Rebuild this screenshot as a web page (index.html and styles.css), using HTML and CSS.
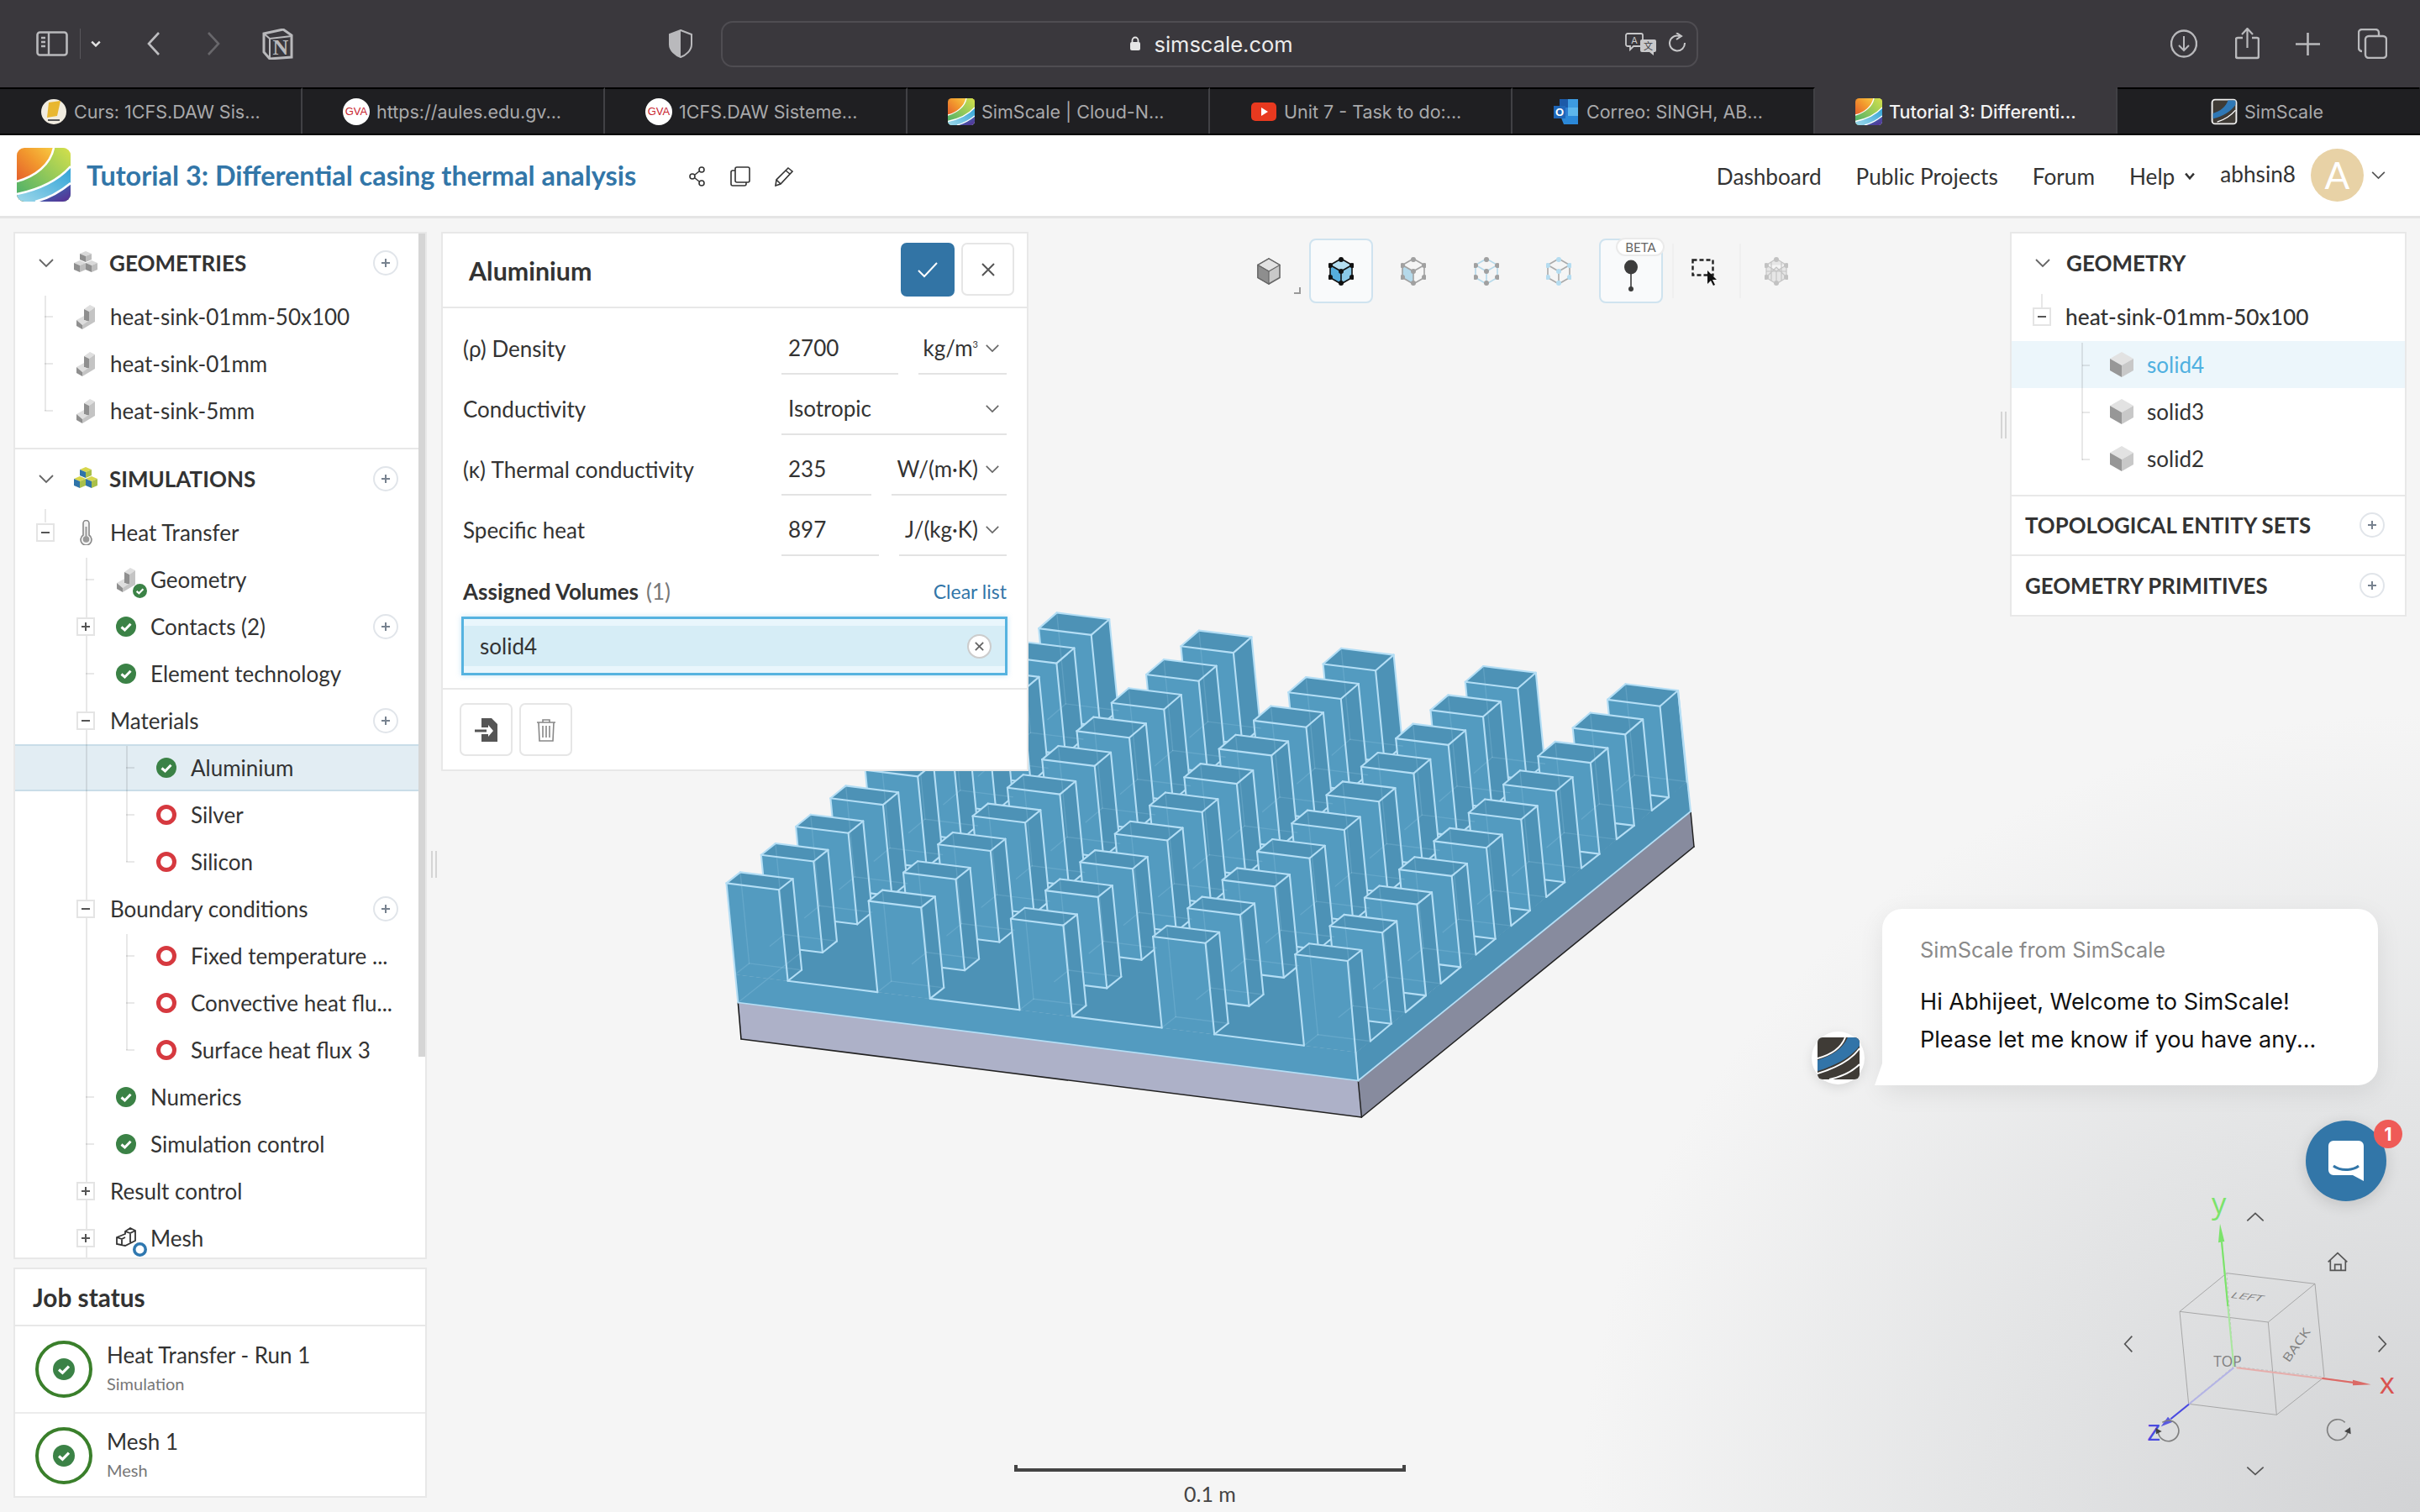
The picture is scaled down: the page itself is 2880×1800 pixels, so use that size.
FILE: index.html
```html
<!DOCTYPE html>
<html lang="en">
<head>
  <meta charset="UTF-8" />
  <title>Tutorial 3: Differential casing thermal analysis - SimScale</title>
  <link rel="stylesheet" href="styles.css">
</head>
<body>
  <svg class="defs" width="0" height="0">
    <defs>
      <linearGradient id="g1" x1="0" y1="1" x2="1" y2="0"><stop offset="0" stop-color="#dd3f2b"/><stop offset=".55" stop-color="#f29a2e"/><stop offset="1" stop-color="#fbe54d"/></linearGradient>
      <linearGradient id="g2" x1="0" y1="1" x2="1" y2="0"><stop offset="0" stop-color="#45ad6b"/><stop offset="1" stop-color="#d5e04b"/></linearGradient>
      <linearGradient id="g3" x1="0" y1="1" x2="1" y2="0"><stop offset="0" stop-color="#9ed8ea"/><stop offset="1" stop-color="#2ea1d6"/></linearGradient>
      <linearGradient id="g4" x1="0" y1="0" x2="1" y2="1"><stop offset="0" stop-color="#2a86c0"/><stop offset="1" stop-color="#5b2b92"/></linearGradient>
      <clipPath id="logo-clip"><rect width="64" height="64" rx="9"/></clipPath>
      <clipPath id="mark-clip"><rect width="50" height="50" rx="6"/></clipPath>
      <symbol id="logo" viewBox="0 0 64 64">
        <g clip-path="url(#logo-clip)">
          <rect width="64" height="64" fill="url(#g1)"/>
          <path d="M44 0C40 20 22 34 0 40V64H64V0Z" fill="url(#g2)"/>
          <path d="M64 22C48 40 24 50 0 55V64H64Z" fill="url(#g3)"/>
          <path d="M64 42C52 52 38 60 22 64H64Z" fill="url(#g4)"/>
          <path d="M44 0C40 20 22 34 0 40M64 22C48 40 24 50 0 55M64 42C52 52 38 60 22 64" fill="none" stroke="#fff" stroke-width="2.6"/>
        </g>
      </symbol>
      <symbol id="mark" viewBox="0 0 50 50">
        <g clip-path="url(#mark-clip)">
          <rect width="50" height="50" fill="#3f3b36"/>
          <path d="M36 0H50V10C40 24 20 34 0 40V27C16 22 30 14 36 0Z" fill="#3274a8"/>
          <path d="M33 0C28 13 15 21 0 25M50 13C40 27 20 37 0 43M50 32C40 42 28 47 14 50" fill="none" stroke="#fff" stroke-width="2"/>
        </g>
      </symbol>
      <symbol id="chev" viewBox="0 0 20 12"><path d="M2 2L10 10L18 2" fill="none" stroke="currentColor" stroke-width="1.8"/></symbol>
      <symbol id="plus-c" viewBox="0 0 30 30"><circle cx="15" cy="15" r="14" fill="#fff" stroke="#e1e5ea" stroke-width="2"/><path d="M10 15H20M15 10V20" stroke="#77828f" stroke-width="2"/></symbol>
      <symbol id="exp-minus" viewBox="0 0 22 22"><rect x="1" y="1" width="20" height="20" fill="#fff" stroke="#e4e4e4" stroke-width="2"/><path d="M6 11H16" stroke="#555" stroke-width="2"/></symbol>
      <symbol id="exp-plus" viewBox="0 0 22 22"><rect x="1" y="1" width="20" height="20" fill="#fff" stroke="#e4e4e4" stroke-width="2"/><path d="M6 11H16M11 6V16" stroke="#555" stroke-width="2"/></symbol>
      <symbol id="ok" viewBox="0 0 24 24"><circle cx="12" cy="12" r="12" fill="#3b8246"/><path d="M6.5 12.5L10.5 16L17.5 8.8" fill="none" stroke="#fff" stroke-width="3"/></symbol>
      <symbol id="bad" viewBox="0 0 24 24"><circle cx="12" cy="12" r="9.5" fill="none" stroke="#d6393f" stroke-width="5"/></symbol>
      <symbol id="blocks" viewBox="0 0 30 30">
        <path d="M15 1L22 4L15 7L8 4Z" fill="#d9d9d9"/><path d="M8 4L15 7V14L8 11Z" fill="#8f8f8f"/><path d="M22 4L15 7V14L22 11Z" fill="#bdbdbd"/>
        <path d="M8 12L15 15L8 18L1 15Z" fill="#d9d9d9"/><path d="M1 15L8 18V26L1 23Z" fill="#8f8f8f"/><path d="M15 15L8 18V26L15 23Z" fill="#bdbdbd"/>
        <path d="M22 12L29 15L22 18L15 15Z" fill="#d9d9d9"/><path d="M15 15L22 18V26L15 23Z" fill="#8f8f8f"/><path d="M29 15L22 18V26L29 23Z" fill="#bdbdbd"/>
      </symbol>
      <symbol id="blocks-col" viewBox="0 0 30 30">
        <path d="M15 1L22 4L15 7L8 4Z" fill="#d7d64c"/><path d="M8 4L15 7V14L8 11Z" fill="#2f74a8"/><path d="M22 4L15 7V14L22 11Z" fill="#a9c04b"/>
        <path d="M8 12L15 15L8 18L1 15Z" fill="#d7d64c"/><path d="M1 15L8 18V26L1 23Z" fill="#2f74a8"/><path d="M15 15L8 18V26L15 23Z" fill="#a9c04b"/>
        <path d="M22 12L29 15L22 18L15 15Z" fill="#d7d64c"/><path d="M15 15L22 18V26L15 23Z" fill="#2f74a8"/><path d="M29 15L22 18V26L29 23Z" fill="#a9c04b"/>
      </symbol>
      <symbol id="step" viewBox="0 0 30 30">
        <path d="M13 6L20 1L26 4L19 9Z" fill="#dedede"/><path d="M13 6L19 9V21L13 19Z" fill="#8f8f8f"/><path d="M26 4L19 9V21L26 16Z" fill="#c4c4c4"/>
        <path d="M4 19L13 14V19L19 21L11 25Z" fill="#dedede"/><path d="M4 19L11 25V30L4 26Z" fill="#8f8f8f"/><path d="M11 25L26 15V21L11 30Z" fill="#c4c4c4"/>
      </symbol>
      <symbol id="step-line" viewBox="0 0 30 30">
        <path d="M14 7L20 3L26 6V18L14 24L4 22V14L14 10ZM14 7L20 9L26 6M20 9V20M4 14L10 16L14 14M10 16V24" fill="none" stroke="#333" stroke-width="1.8"/>
      </symbol>
      <symbol id="thermo" viewBox="0 0 30 30">
        <path d="M12 4a3.5 3.5 0 0 1 7 0V18a6.5 6.5 0 1 1-7 0Z" fill="#f2f2f2" stroke="#888" stroke-width="1.6"/><circle cx="15.5" cy="23" r="3.8" fill="#999"/><path d="M15.5 8V22" stroke="#999" stroke-width="2"/>
      </symbol>
      <symbol id="cube" viewBox="0 0 28 30"><path d="M14 0L28 8L14 16L0 8Z" fill="#e2e2e2"/><path d="M0 8L14 16V30L0 22Z" fill="#979797"/><path d="M28 8L14 16V30L28 22Z" fill="#c8c8c8"/></symbol>
    </defs>
  </svg>

  <div class="toolbar">
    <svg class="tb-sidebar" width="38" height="30" viewBox="0 0 38 30"><rect x="1.5" y="1.5" width="35" height="27" rx="3" fill="none" stroke="#b9b9bc" stroke-width="2.6"/><path d="M15 2V28M6 8H11M6 13H11M6 18H11" stroke="#b9b9bc" stroke-width="2.4"/></svg>
    <span class="tb-divider"></span>
    <svg class="tb-chevron" width="12" height="8" viewBox="0 0 20 12"><path d="M2 2L10 10L18 2" fill="none" stroke="#e2e2e2" stroke-width="4"/></svg>
    <svg class="tb-back" width="16" height="28" viewBox="0 0 16 28"><path d="M14 1L2 14L14 27" fill="none" stroke="#bdbdc0" stroke-width="2.6"/></svg>
    <svg class="tb-forward" width="16" height="28" viewBox="0 0 16 28"><path d="M2 1L14 14L2 27" fill="none" stroke="#68676b" stroke-width="2.6"/></svg>
    <svg class="tb-notion" width="37" height="37" viewBox="0 0 37 37">
      <path d="M2 6L25 1L35 8V34L9 36L2 28Z" fill="none" stroke="#b9b9bc" stroke-width="3"/><path d="M2 6L9 12L35 9M9 12V35" fill="none" stroke="#b9b9bc" stroke-width="2"/>
      <text class="notion-n" x="22" y="31">N</text>
    </svg>
    <svg class="tb-shield" width="28" height="34" viewBox="0 0 28 34"><path d="M14 1L27 6V18C27 25 20 31 14 33C8 31 1 25 1 18V6Z" fill="none" stroke="#b9b9bc" stroke-width="2"/><path d="M14 1L1 6V18C1 25 8 31 14 33Z" fill="#b9b9bc"/></svg>
    <div class="address">
      <span></span>
      <div class="address-host">
        <svg width="14" height="18" viewBox="0 0 14 18"><rect x="1" y="7" width="12" height="10" rx="2" fill="#e6e6e6"/><path d="M3.5 8V5a3.5 3.5 0 0 1 7 0V8" fill="none" stroke="#e6e6e6" stroke-width="1.8"/></svg>
        <span>simscale.com</span>
      </div>
      <div class="address-tools">
        <svg width="38" height="27" viewBox="0 0 38 27"><path d="M3 1H19a2 2 0 0 1 2 2V14a2 2 0 0 1-2 2H10L6 20V16H3a2 2 0 0 1-2-2V3a2 2 0 0 1 2-2Z" fill="none" stroke="#c8c8ca" stroke-width="1.8"/><path d="M20 8H35a2 2 0 0 1 2 2V21a2 2 0 0 1-2 2H34V27L29 23H20a2 2 0 0 1-2-2V10a2 2 0 0 1 2-2Z" fill="#c8c8ca"/><text class="tr-a" x="11" y="13">A</text><text class="tr-b" x="27.500" y="20">文</text></svg>
        <svg width="21" height="26" viewBox="0 0 21 26"><path d="M13 4A9 9 0 1 0 19 12" fill="none" stroke="#c8c8ca" stroke-width="2"/><path d="M9 0L15 4L9 8" fill="none" stroke="#c8c8ca" stroke-width="2"/></svg>
      </div>
    </div>
    <svg class="tb-download" width="32" height="34" viewBox="0 0 32 34"><ellipse cx="16" cy="17" rx="15" ry="15.500" fill="none" stroke="#b9b9bc" stroke-width="2.4"/><path d="M16 8V25M10 19L16 25L22 19" fill="none" stroke="#b9b9bc" stroke-width="2"/></svg>
    <svg class="tb-share" width="29" height="38" viewBox="0 0 29 38"><path d="M9 12H3a2 2 0 0 0-2 2V34a2 2 0 0 0 2 2H26a2 2 0 0 0 2-2V14a2 2 0 0 0-2-2H20" fill="none" stroke="#b9b9bc" stroke-width="2.6"/><path d="M14.500 24V2M8 8L14.500 1L21 8" fill="none" stroke="#b9b9bc" stroke-width="2.2"/></svg>
    <svg class="tb-plus" width="29" height="27" viewBox="0 0 29 27"><path d="M14.500 0V27M0 13.500H29" stroke="#b9b9bc" stroke-width="2.6"/></svg>
    <svg class="tb-tabs" width="35" height="36" viewBox="0 0 35 36"><rect x="9" y="9" width="25" height="26" rx="4" fill="#3a383d" stroke="#b9b9bc" stroke-width="2.4"/><path d="M5 27A4 4 0 0 1 1 23V5A4 4 0 0 1 5 1H21A4 4 0 0 1 25 5V9" fill="none" stroke="#b9b9bc" stroke-width="2.4"/></svg>
  </div>

  <div class="tabbar">
    <div class="tab">
      <svg class="favicon" viewBox="0 0 32 32"><circle cx="16" cy="16" r="15" fill="#f1ece0"/><path d="M10 5L24 3L20 21L8 23Z" fill="#e8b730"/><path d="M9 26H23" stroke="#555" stroke-width="2"/></svg>
      <span class="tab-title">Curs: 1CFS.DAW Sis...</span>
    </div>
    <div class="tab">
      <svg class="favicon" viewBox="0 0 32 32"><circle cx="16" cy="16" r="16" fill="#fff"/><text class="gva" x="16" y="20">GVA</text></svg>
      <span class="tab-title">https://aules.edu.gv...</span>
    </div>
    <div class="tab">
      <svg class="favicon" viewBox="0 0 32 32"><circle cx="16" cy="16" r="16" fill="#fff"/><text class="gva" x="16" y="20">GVA</text></svg>
      <span class="tab-title">1CFS.DAW Sisteme...</span>
    </div>
    <div class="tab">
      <svg class="favicon" viewBox="0 0 64 64"><use href="#logo"/></svg>
      <span class="tab-title">SimScale | Cloud-N...</span>
    </div>
    <div class="tab">
      <svg class="favicon" viewBox="0 0 32 32"><rect x="1" y="5" width="30" height="22" rx="5" fill="#e8391f"/><path d="M13 11L21 16L13 21Z" fill="#fff"/></svg>
      <span class="tab-title">Unit 7 - Task to do:...</span>
    </div>
    <div class="tab">
      <svg class="favicon" viewBox="0 0 32 32"><rect x="8" y="1" width="10" height="10" fill="#1c5aa8"/><rect x="18" y="1" width="12" height="10" fill="#3d9be0"/><rect x="8" y="11" width="10" height="10" fill="#2b7cd3"/><rect x="18" y="11" width="12" height="10" fill="#5db6ec"/><path d="M9 21H30V31H13Z" fill="#2b88d8"/><rect x="1" y="9" width="14" height="15" fill="#1f66b8"/><text class="ol" x="8" y="21">O</text></svg>
      <span class="tab-title">Correo: SINGH, AB...</span>
    </div>
    <div class="tab tab-active">
      <svg class="favicon" viewBox="0 0 64 64"><use href="#logo"/></svg>
      <span class="tab-title">Tutorial 3: Differenti...</span>
    </div>
    <div class="tab tab-last">
      <svg class="favicon" viewBox="0 0 50 50"><rect x="1" y="1" width="48" height="48" rx="7" fill="#f0f0f0"/><rect x="4" y="4" width="42" height="42" rx="4" fill="#3f3b36"/><path d="M32 4H46V12C38 24 22 34 4 38V28C18 24 28 16 32 4Z" fill="#2f78b6"/><path d="M46 22C36 34 24 40 12 44" fill="none" stroke="#fff" stroke-width="2"/></svg>
      <span class="tab-title">SimScale</span>
    </div>
  </div>

  <header class="app-header">
    <svg class="app-logo" viewBox="0 0 64 64"><use href="#logo"/></svg>
    <h1 class="project-title">Tutorial 3: Differential casing thermal analysis</h1>
    <div class="project-actions">
      <svg width="22" height="24" viewBox="0 0 22 24"><circle cx="16" cy="4" r="3" fill="none" stroke="#333" stroke-width="1.6"/><circle cx="5" cy="12" r="3" fill="none" stroke="#333" stroke-width="1.6"/><circle cx="16" cy="20" r="3" fill="none" stroke="#333" stroke-width="1.6"/><path d="M8 10L13 6M8 14L13 18" stroke="#333" stroke-width="1.6"/></svg>
      <svg width="24" height="24" viewBox="0 0 24 24"><rect x="6" y="1" width="17" height="18" rx="2" fill="none" stroke="#333" stroke-width="1.6"/><path d="M6 5H3a2 2 0 0 0-2 2V21a2 2 0 0 0 2 2H17a2 2 0 0 0 2-2V19" fill="none" stroke="#333" stroke-width="1.6"/></svg>
      <svg width="24" height="24" viewBox="0 0 24 24"><path d="M17 2L22 6L8 21L2 23L3 16ZM3 16L8 21M14 5L19 9" fill="none" stroke="#333" stroke-width="1.6"/></svg>
    </div>
    <nav class="top-nav">
      <a>Dashboard</a>
      <a>Public Projects</a>
      <a>Forum</a>
      <a class="help">Help <svg width="14" height="9" viewBox="0 0 20 12"><path d="M3 2L10 10L17 2" fill="none" stroke="#333" stroke-width="3.6"/></svg></a>
      <span class="user-name">abhsin8</span>
      <span class="avatar">A</span>
      <svg class="user-chevron" width="19" height="11" viewBox="0 0 20 12"><use href="#chev"/></svg>
    </nav>
  </header>

  <main class="viewport">
    <svg id="sink" class="sink" viewBox="0 260 2880 1540" width="2880" height="1540"></svg>

    <aside class="left-col">
      <section class="panel tree-panel">
        <div class="tree">
          <div class="section geo-section">
            <div class="head">
              <svg class="head-chev" viewBox="0 0 20 12"><use href="#chev"/></svg>
              <svg class="icon" viewBox="0 0 30 30"><use href="#blocks"/></svg>
              <span class="head-title">GEOMETRIES</span>
              <svg class="add" viewBox="0 0 30 30"><use href="#plus-c"/></svg>
            </div>
            <div class="branch b0 b-geo">
              <div class="row lvl0 tick"><span class="exp"></span><svg class="icon" viewBox="0 0 30 30"><use href="#step"/></svg><span>heat-sink-01mm-50x100</span></div>
              <div class="row lvl0 tick"><span class="exp"></span><svg class="icon" viewBox="0 0 30 30"><use href="#step"/></svg><span>heat-sink-01mm</span></div>
              <div class="row lvl0 tick"><span class="exp"></span><svg class="icon" viewBox="0 0 30 30"><use href="#step"/></svg><span>heat-sink-5mm</span></div>
            </div>
          </div>
          <div class="section">
            <div class="head">
              <svg class="head-chev" viewBox="0 0 20 12"><use href="#chev"/></svg>
              <svg class="icon" viewBox="0 0 30 30"><use href="#blocks-col"/></svg>
              <span class="head-title">SIMULATIONS</span>
              <svg class="add" viewBox="0 0 30 30"><use href="#plus-c"/></svg>
            </div>
            <div class="row lvl0 stem"><svg class="exp" viewBox="0 0 22 22"><use href="#exp-minus"/></svg><svg class="icon" viewBox="0 0 30 30"><use href="#thermo"/></svg><span>Heat Transfer</span></div>
            <div class="branch b1">
              <div class="row lvl1 tick"><span class="exp"></span><span class="icon badged"><svg class="icon-inner" viewBox="0 0 30 30"><use href="#step"/></svg><svg class="badge" viewBox="0 0 24 24"><use href="#ok"/></svg></span><span>Geometry</span></div>
              <div class="row lvl1"><svg class="exp" viewBox="0 0 22 22"><use href="#exp-plus"/></svg><svg class="icon status" viewBox="0 0 24 24"><use href="#ok"/></svg><span>Contacts (2)</span><svg class="add" viewBox="0 0 30 30"><use href="#plus-c"/></svg></div>
              <div class="row lvl1 tick"><span class="exp"></span><svg class="icon status" viewBox="0 0 24 24"><use href="#ok"/></svg><span>Element technology</span></div>
              <div class="row lvl1"><svg class="exp" viewBox="0 0 22 22"><use href="#exp-minus"/></svg><span class="no-icon"></span><span>Materials</span><svg class="add" viewBox="0 0 30 30"><use href="#plus-c"/></svg></div>
              <div class="branch b2">
                <div class="row lvl2 tick selected"><span class="exp"></span><svg class="icon status" viewBox="0 0 24 24"><use href="#ok"/></svg><span>Aluminium</span></div>
                <div class="row lvl2 tick"><span class="exp"></span><svg class="icon status" viewBox="0 0 24 24"><use href="#bad"/></svg><span>Silver</span></div>
                <div class="row lvl2 tick"><span class="exp"></span><svg class="icon status" viewBox="0 0 24 24"><use href="#bad"/></svg><span>Silicon</span></div>
              </div>
              <div class="row lvl1"><svg class="exp" viewBox="0 0 22 22"><use href="#exp-minus"/></svg><span class="no-icon"></span><span>Boundary conditions</span><svg class="add" viewBox="0 0 30 30"><use href="#plus-c"/></svg></div>
              <div class="branch b2">
                <div class="row lvl2 tick"><span class="exp"></span><svg class="icon status" viewBox="0 0 24 24"><use href="#bad"/></svg><span>Fixed temperature ...</span></div>
                <div class="row lvl2 tick"><span class="exp"></span><svg class="icon status" viewBox="0 0 24 24"><use href="#bad"/></svg><span>Convective heat flu...</span></div>
                <div class="row lvl2 tick"><span class="exp"></span><svg class="icon status" viewBox="0 0 24 24"><use href="#bad"/></svg><span>Surface heat flux 3</span></div>
              </div>
              <div class="row lvl1 tick"><span class="exp"></span><svg class="icon status" viewBox="0 0 24 24"><use href="#ok"/></svg><span>Numerics</span></div>
              <div class="row lvl1 tick"><span class="exp"></span><svg class="icon status" viewBox="0 0 24 24"><use href="#ok"/></svg><span>Simulation control</span></div>
              <div class="row lvl1"><svg class="exp" viewBox="0 0 22 22"><use href="#exp-plus"/></svg><span class="no-icon"></span><span>Result control</span></div>
              <div class="row lvl1"><svg class="exp" viewBox="0 0 22 22"><use href="#exp-plus"/></svg><span class="icon badged"><svg class="icon-inner" viewBox="0 0 30 30"><use href="#step-line"/></svg><svg class="badge" viewBox="0 0 24 24"><circle cx="12" cy="12" r="9.500" fill="none" stroke="#2f78b0" stroke-width="5"/></svg></span><span>Mesh</span></div>
            </div>
          </div>
        </div>
        <span class="scrollbar"></span>
      </section>

      <section class="panel job-panel">
        <div class="job-title">Job status</div>
        <div class="job-row">
          <span class="job-ring"><svg viewBox="0 0 24 24"><use href="#ok"/></svg></span>
          <div class="job-text"><div>Heat Transfer - Run 1</div><div class="job-sub">Simulation</div></div>
        </div>
        <div class="job-row">
          <span class="job-ring"><svg viewBox="0 0 24 24"><use href="#ok"/></svg></span>
          <div class="job-text"><div>Mesh 1</div><div class="job-sub">Mesh</div></div>
        </div>
      </section>
    </aside>

    <section class="panel material">
      <div class="material-head">
        <h2>Aluminium</h2>
        <button class="btn-ok"><svg width="26" height="20" viewBox="0 0 26 20"><path d="M2 11L9 18L24 2" fill="none" stroke="#fff" stroke-width="2"/></svg></button>
        <button class="btn-close"><svg width="18" height="18" viewBox="0 0 18 18"><path d="M2 2L16 16M16 2L2 16" stroke="#555" stroke-width="2"/></svg></button>
      </div>
      <div class="form">
        <div class="field-row"><label>(ρ) Density</label><span class="field w139">2700</span><span class="field unit w105"><span>kg/m<sup>3</sup></span><svg viewBox="0 0 20 12"><use href="#chev"/></svg></span></div>
        <div class="field-row"><label>Conductivity</label><span class="field w268 select">Isotropic<svg viewBox="0 0 20 12"><use href="#chev"/></svg></span></div>
        <div class="field-row"><label>(κ) Thermal conductivity</label><span class="field w107">235</span><span class="field unit w137">W/(m·K)<svg viewBox="0 0 20 12"><use href="#chev"/></svg></span></div>
        <div class="field-row"><label>Specific heat</label><span class="field w116">897</span><span class="field unit w128">J/(kg·K)<svg viewBox="0 0 20 12"><use href="#chev"/></svg></span></div>
      </div>
      <div class="assigned-head">
        <span class="assigned-title">Assigned Volumes</span><span class="assigned-count">(1)</span>
        <a class="clear-list">Clear list</a>
      </div>
      <div class="assigned-box">
        <div class="assigned-item">
          <span>solid4</span>
          <span class="remove"><svg width="13" height="13" viewBox="0 0 14 14"><path d="M2 2L12 12M12 2L2 12" stroke="#666" stroke-width="2"/></svg></span>
        </div>
      </div>
      <div class="material-foot">
        <button class="btn-icon"><svg width="28" height="30" viewBox="0 0 28 30"><path d="M8 1H20L27 8V29H8V20H16V23L22 16L16 9V12H8Z" fill="#555"/><path d="M0 16H14" stroke="#555" stroke-width="3"/></svg></button>
        <button class="btn-icon"><svg width="24" height="28" viewBox="0 0 24 28"><path d="M1 5H23M8 5V2H16V5M3 5L4 27H20L21 5M8 9V23M12 9V23M16 9V23" fill="none" stroke="#888" stroke-width="1.6"/></svg></button>
      </div>
    </section>

    <span class="spacer"></span>

    <section class="panel geometry">
      <div class="g-head">
        <svg class="head-chev" viewBox="0 0 20 12"><use href="#chev"/></svg>
        <span class="head-title">GEOMETRY</span>
      </div>
      <div class="g-root">
        <svg class="g-exp" viewBox="0 0 22 22"><use href="#exp-minus"/></svg>
        <span>heat-sink-01mm-50x100</span>
      </div>
      <div class="g-branch">
        <div class="g-row g-selected"><svg class="g-cube" viewBox="0 0 28 30"><use href="#cube"/></svg><span>solid4</span></div>
        <div class="g-row"><svg class="g-cube" viewBox="0 0 28 30"><use href="#cube"/></svg><span>solid3</span></div>
        <div class="g-row"><svg class="g-cube" viewBox="0 0 28 30"><use href="#cube"/></svg><span>solid2</span></div>
      </div>
      <div class="g-set"><span class="head-title">TOPOLOGICAL ENTITY SETS</span><svg class="add" viewBox="0 0 30 30"><use href="#plus-c"/></svg></div>
      <div class="g-set"><span class="head-title">GEOMETRY PRIMITIVES</span><svg class="add" viewBox="0 0 30 30"><use href="#plus-c"/></svg></div>
    </section>

    <span class="handle handle-left"></span>
    <span class="handle handle-right"></span>

    <div class="view-tools">
      <div class="tool">
        <svg width="28" height="32" viewBox="0 0 28 32"><path d="M14 1L27 8.500V23.500L14 31L1 23.500V8.500Z" fill="#c8c8c8" stroke="#666" stroke-width="1.6"/><path d="M14 1L27 8.500L14 16L1 8.500Z" fill="#e3e3e3" stroke="#666" stroke-width="1.2"/><path d="M1 8.500L14 16V31L1 23.500Z" fill="#8e8e8e" stroke="#666" stroke-width="1.2"/></svg>
        <span class="tool-corner"></span>
      </div>
      <div class="tool tool-on">
        <svg width="30" height="34" viewBox="0 0 30 34"><path d="M15 2L28 9.500L15 17L2 9.500Z" fill="#b5dff2"/><path d="M2 9.500L15 17V32L2 24.500Z" fill="#56aede"/><path d="M28 9.500L15 17V32L28 24.500Z" fill="#8ac9e8"/><path d="M15 2L28 9.500V24.500L15 32L2 24.500V9.500ZM2 9.500L15 17L28 9.500M15 17V32" fill="none" stroke="#111" stroke-width="1.6"/><g fill="#111"><circle cx="15" cy="3" r="3"/><circle cx="28" cy="10" r="3"/><circle cx="28" cy="24" r="3"/><circle cx="15" cy="31" r="3"/><circle cx="2" cy="24" r="3"/><circle cx="2" cy="10" r="3"/><circle cx="15" cy="17" r="3"/></g></svg>
      </div>
      <div class="tool">
        <svg width="30" height="34" viewBox="0 0 30 34"><path d="M2 9.500L15 17V32L2 24.500Z" fill="#b5d9ea"/><path d="M15 2L28 9.500V24.500L15 32L2 24.500V9.500ZM2 9.500L15 17L28 9.500M15 17V32" fill="none" stroke="#a2a2a2" stroke-width="1.6"/><g fill="#a0a0a0"><circle cx="15" cy="3" r="3"/><circle cx="28" cy="10" r="3"/><circle cx="28" cy="24" r="3"/><circle cx="15" cy="31" r="3"/><circle cx="2" cy="24" r="3"/><circle cx="2" cy="10" r="3"/><circle cx="15" cy="17" r="3"/></g></svg>
      </div>
      <div class="tool">
        <svg width="30" height="34" viewBox="0 0 30 34"><path d="M15 2L28 9.500V24.500L15 32L2 24.500V9.500ZM2 9.500L15 17L28 9.500M15 17V32" fill="none" stroke="#b5d9ea" stroke-width="1.6"/><g fill="#a0a0a0"><circle cx="15" cy="3" r="3"/><circle cx="28" cy="10" r="3"/><circle cx="28" cy="24" r="3"/><circle cx="15" cy="31" r="3"/><circle cx="2" cy="24" r="3"/><circle cx="2" cy="10" r="3"/><circle cx="15" cy="17" r="3"/></g></svg>
      </div>
      <div class="tool">
        <svg width="30" height="34" viewBox="0 0 30 34"><path d="M15 2L28 9.500V24.500L15 32L2 24.500V9.500ZM2 9.500L15 17L28 9.500M15 17V32" fill="none" stroke="#aaa" stroke-width="1.6"/><g fill="#b5dcf0"><circle cx="15" cy="3" r="3"/><circle cx="28" cy="10" r="3"/><circle cx="28" cy="24" r="3"/><circle cx="15" cy="31" r="3"/><circle cx="2" cy="24" r="3"/><circle cx="2" cy="10" r="3"/><circle cx="15" cy="17" r="3"/></g></svg>
      </div>
      <div class="tool tool-on tool-pin">
        <span class="beta">BETA</span>
        <svg width="18" height="40" viewBox="0 0 18 40"><ellipse cx="9" cy="9" rx="8" ry="8.500" fill="#3c3c3c"/><path d="M9 16V35" stroke="#3c3c3c" stroke-width="1.6"/><circle cx="9" cy="35" r="3" fill="#3c3c3c"/></svg>
      </div>
      <div class="tool tool-sep tool-select">
        <svg width="32" height="32" viewBox="0 0 32 32"><rect x="1.500" y="1.500" width="24" height="18" fill="none" stroke="#222" stroke-width="2.400" stroke-dasharray="5 3"/><path d="M19 14V30L23 26L26 32L28 31L25 25H30Z" fill="#111"/></svg>
      </div>
      <div class="tool tool-sep tool-last">
        <svg width="28" height="34" viewBox="0 0 28 34"><path d="M14 2L26 9.500V24.500L14 32L2 24.500V9.500ZM2 9.500L14 17L26 9.500M14 17V32M8 6V28M20 6V28M2 17L26 17M2 24L14 12L26 24" fill="#e6e6e6" stroke="#c4c4c4" stroke-width="1.200"/><g fill="#c2c2c2"><circle cx="14" cy="3" r="3"/><circle cx="26" cy="10" r="3"/><circle cx="26" cy="24" r="3"/><circle cx="14" cy="31" r="3"/><circle cx="2" cy="24" r="3"/><circle cx="2" cy="10" r="3"/></g></svg>
      </div>
    </div>

    <div class="scale-bar"><span class="scale-line"></span><span class="scale-label">0.1 m</span></div>

    <div class="chat-avatar"><svg width="50" height="50" viewBox="0 0 50 50"><use href="#mark"/></svg></div>
    <div class="chat-bubble">
      <div class="chat-from">SimScale from SimScale</div>
      <div class="chat-text">Hi Abhijeet, Welcome to SimScale!<br>Please let me know if you have any...</div>
    </div>
    <div class="launcher">
      <svg width="42" height="48" viewBox="0 0 42 48"><path d="M6 0H36a6 6 0 0 1 6 6V48L29 41H6a6 6 0 0 1-6-6V6a6 6 0 0 1 6-6Z" fill="#fff"/><path d="M6 30C14 36 28 36 36 30" fill="none" stroke="#3276a8" stroke-width="3"/></svg>
      <span class="launcher-badge">1</span>
    </div>

    <svg class="gizmo" width="460" height="400" viewBox="0 0 1380 1200">
      <g fill="none" stroke="#9b9b9b" stroke-width="2.500">
        <path d="M522 484L690 347L1005 385L838 522ZM522 484L554 814L868 853L838 522M1005 385L1038 718L868 853"/>
        <path d="M690 347L715 680L1038 718M715 680L554 814" stroke-dasharray="9 7" stroke="#bdbdbd"/>
      </g>
      <text class="g-label g-top" x="643" y="682">TOP</text>
      <text class="g-label g-left" transform="translate(700 434) rotate(7) skewX(-35) scale(1.050 .6)">LEFT</text>
      <text class="g-label g-back" transform="translate(912 668) rotate(-55) scale(1 .8)">BACK</text>
      <path d="M715 680L672 235" stroke="#a9e79f" stroke-width="6"/>
      <path d="M694 465L672 235" stroke="#7be36b" stroke-width="6"/>
      <path d="M666 170L660 238L682 234Z" fill="#7be36b"/>
      <path d="M725 685L1145 738" stroke="#e6adab" stroke-width="6"/>
      <path d="M1030 722L1145 738" stroke="#db6a66" stroke-width="6"/>
      <path d="M1140 728L1205 745L1140 748Z" fill="#db6a66"/>
      <path d="M715 685L490 868" stroke="#b3b3e6" stroke-width="6"/>
      <path d="M555 815L490 868" stroke="#4a4ae0" stroke-width="6"/>
      <path d="M480 860L455 895L497 878Z" fill="#5a5ae0"/>
      <text class="axis axis-y" x="636" y="134">y</text>
      <text class="axis axis-x" x="1235" y="778">x</text>
      <text class="axis axis-z" x="405" y="945">z</text>
      <g fill="none" stroke="#555" stroke-width="5">
        <path d="M763 160L792 133L821 160M763 1040L792 1066L821 1040M352 572L326 600L352 628M1232 572L1258 600L1232 628"/>
        <path d="M1052 307L1086 275L1120 307M1060 300V337H1114V300M1076 337V316H1098V337"/>
      </g>
      <path d="M460 880A37 37 0 1 1 445 915" fill="none" stroke="#808080" stroke-width="5"/>
      <path d="M436 900L458 912L438 922Z" fill="#444"/>
      <path d="M1112 880A37 37 0 1 0 1122 915" fill="none" stroke="#808080" stroke-width="5"/>
      <path d="M1131 897L1110 912L1133 922Z" fill="#444"/>
    </svg>
  </main>

  <script src="heatsink.js"></script>
</body>
</html>
```

FILE: styles.css
```css
* {
  box-sizing: border-box;
}
html, body {
  margin: 0;
  padding: 0;
}
body {
  width: 2880px;
  height: 1800px;
  overflow: hidden;
  display: flex;
  flex-direction: column;
  font-family: Lato, "Open Sans", sans-serif;
  font-size: 26px;
  color: #333;
  background: #f5f5f5;
}
.defs {
  position: absolute;
}
svg {
  display: block;
  flex: none;
}

/* safari chrome */
.toolbar {
  height: 104px;
  flex: none;
  display: flex;
  align-items: center;
  padding-left: 43px;
  background: #3a383d;
}
.tb-divider {
  width: 1px;
  height: 36px;
  margin-left: 14px;
  background: #58565b;
}
.tb-chevron { margin-left: 12px; }
.tb-back { margin-left: 55px; }
.tb-forward { margin-left: 55px; }
.tb-notion { margin-left: 50px; }
.tb-shield { margin-left: 447px; }
.address {
  width: 1163px;
  height: 55px;
  margin-left: 34px;
  padding-right: 12px;
  display: grid;
  grid-template-columns: 1fr auto 1fr;
  align-items: center;
  border: 2px solid #4f4d52;
  border-radius: 14px;
}
.address-host {
  display: flex;
  align-items: center;
  gap: 15px;
  padding-left: 16px;
  font-family: Inter, sans-serif;
  font-size: 25.5px;
  color: #ececec;
}
.address-tools {
  display: flex;
  align-items: center;
  justify-content: flex-end;
  gap: 14px;
}
.notion-n {
  font-family: "Liberation Serif", serif;
  font-weight: 700;
  font-size: 26px;
  text-anchor: middle;
  fill: #b9b9bc;
}
.tr-a {
  font-family: Inter, sans-serif;
  font-size: 11px;
  text-anchor: middle;
  fill: #c8c8ca;
}
.tr-b {
  font-family: "Noto Sans CJK SC", sans-serif;
  font-size: 11px;
  text-anchor: middle;
  fill: #3a383d;
}
.tb-download { margin-left: 562px; }
.tb-share { margin-left: 45px; }
.tb-plus { margin-left: 43px; }
.tb-tabs { margin-left: 45px; }

.tabbar {
  height: 57px;
  flex: none;
  display: flex;
  background: #1f1f22;
  border-bottom: 2px solid #000;
}
.tab {
  width: 360px;
  height: 55px;
  display: flex;
  align-items: center;
  gap: 8px;
  padding-left: 48px;
  border-top: 2px solid #000;
  border-right: 2px solid #414145;
  font-family: Inter, sans-serif;
  font-size: 21.5px;
  color: #a9a9ab;
  white-space: nowrap;
}
.favicon {
  width: 32px;
  height: 32px;
}
.tab-active {
  background: #3a383d;
  border-top-color: #3a383d;
  color: #f2f2f2;
  font-weight: 500;
}
.tab-last {
  width: 359px;
  padding-left: 111px;
  border-right: none;
}
.gva {
  font-family: "Liberation Sans", sans-serif;
  font-size: 13px;
  text-anchor: middle;
  fill: #c8242f;
}
.ol {
  font-family: "Liberation Sans", sans-serif;
  font-size: 13px;
  font-weight: 700;
  text-anchor: middle;
  fill: #fff;
}

/* app header */
.app-header {
  height: 99px;
  flex: none;
  display: flex;
  align-items: center;
  padding: 0 40px 2px 20px;
  background: #fff;
  border-bottom: 3px solid #e5e5e5;
}
.app-logo {
  width: 64px;
  height: 64px;
}
.project-title {
  margin: 0 0 0 19px;
  font-size: 32.4px;
  font-weight: 700;
  color: #3276a8;
  white-space: nowrap;
}
.project-actions {
  display: flex;
  align-items: center;
  gap: 28px;
  margin: 3px 0 0 62px;
}
.top-nav {
  margin-left: auto;
  display: flex;
  align-items: center;
  font-size: 26.2px;
}
.top-nav a {
  margin: 3px 41px 0 0;
}
.top-nav .help {
  display: flex;
  align-items: center;
  gap: 11px;
  margin-right: 29px;
}
.user-name {
  margin-bottom: 3px;
}
.avatar {
  width: 63px;
  height: 63px;
  margin: 0 8px 0 18px;
  display: flex;
  align-items: center;
  justify-content: center;
  border-radius: 50%;
  background: #e8d2a6;
  color: #fff;
  font-size: 44px;
}
.user-chevron {
  color: #555;
}

/* viewport */
.viewport {
  flex: 1;
  position: relative;
  display: flex;
  align-items: flex-start;
  padding: 16px 16px 17px;
  background: radial-gradient(ellipse 1000px 950px at 100% 100%, #d2d3d5 0, #e3e4e5 50%, #f5f5f5 100%);
}
.sink {
  position: absolute;
  left: 0;
  top: 0;
}
.panel {
  position: relative;
  background: #fff;
  border: 2px solid #e8e8e8;
}
.left-col {
  width: 492px;
  height: 100%;
  display: flex;
  flex-direction: column;
  gap: 10px;
  flex: none;
}
.tree-panel {
  height: 1223px;
  overflow: hidden;
}
.tree {
  margin-right: 8px;
}
.section {
  position: relative;
}
.geo-section {
  padding-bottom: 16px;
  border-bottom: 2px solid #e8e8e8;
}
.head {
  height: 69px;
  margin-bottom: 2px;
  display: flex;
  align-items: center;
  padding-left: 27px;
}
.head-chev {
  width: 20px;
  height: 12px;
  color: #666;
}
.head .icon {
  margin: 0 13px 0 22px;
}
.head-title {
  font-size: 26px;
  font-weight: 700;
  color: #333;
  white-space: nowrap;
}
.icon {
  width: 30px;
  height: 30px;
  margin: 0 14px 0 22px;
}
.add {
  width: 30px;
  height: 30px;
  margin-left: auto;
  margin-right: 24px;
}
.row {
  position: relative;
  height: 56px;
  display: flex;
  align-items: center;
  white-space: nowrap;
}
.lvl0 { padding-left: 25px; }
.lvl1 { padding-left: 73px; }
.lvl2 { padding-left: 121px; }
.exp {
  width: 22px;
  height: 22px;
  flex: none;
  position: relative;
  z-index: 2;
}
.no-icon {
  width: 18px;
  flex: none;
}
.status {
  width: 24px;
  height: 24px;
  margin: 0 17px 0 25px;
}
.badged {
  position: relative;
  display: block;
}
.icon-inner {
  width: 30px;
  height: 30px;
}
.badge {
  position: absolute;
  right: -10px;
  bottom: -7px;
  width: 17px;
  height: 17px;
}
.branch {
  position: relative;
}
.branch::before {
  content: "";
  position: absolute;
  z-index: 1;
  top: 0;
  bottom: 28px;
  width: 2px;
  background: rgba(0, 0, 0, .09);
}
.b0::before { left: 35px; top: 3px; }
.b1::before { left: 84px; top: 2px; bottom: -100px; }
.b2::before { left: 132px; top: 2px; }
.tick::after {
  content: "";
  position: absolute;
  top: 27px;
  height: 2px;
  width: 10px;
  background: rgba(0, 0, 0, .09);
}
.lvl0.tick::after { left: 35px; }
.lvl1.tick::after { left: 84px; }
.lvl2.tick::after { left: 132px; }
.stem::before {
  content: "";
  position: absolute;
  left: 35px;
  top: 0;
  width: 2px;
  height: 16px;
  background: #e8e8e8;
}
.selected {
  background: #e2edf3;
  box-shadow: inset 0 2px 0 #c9dde8, inset 0 -2px 0 #c9dde8;
}
.scrollbar {
  position: absolute;
  right: 0;
  top: 0;
  width: 8px;
  height: 980px;
  background: #d5d5d5;
}

.job-panel {
  height: 274px;
  flex: none;
}
.job-title {
  height: 68px;
  display: flex;
  align-items: center;
  padding-left: 21px;
  font-size: 29.8px;
  font-weight: 700;
  border-bottom: 2px solid #e8e8e8;
}
.job-row {
  height: 102px;
  display: flex;
  align-items: center;
  gap: 17px;
  padding-left: 24px;
}
.job-row + .job-row {
  border-top: 2px solid #ececec;
}
.job-ring {
  width: 68px;
  height: 68px;
  display: flex;
  align-items: center;
  justify-content: center;
  border: 4px solid #3a7f2b;
  border-radius: 50%;
}
.job-ring svg {
  width: 26px;
  height: 26px;
}
.job-text {
  line-height: 34px;
}
.job-sub {
  font-size: 20px;
  color: #777;
}

/* material panel */
.material {
  width: 699px;
  height: 642px;
  margin-left: 17px;
  flex: none;
}
.material-head {
  height: 89px;
  display: flex;
  align-items: center;
  padding: 0 15px 0 31px;
  border-bottom: 2px solid #e8e8e8;
}
.material-head h2 {
  margin: 0 auto 0 0;
  font-size: 30.4px;
  font-weight: 700;
}
.material-head button {
  margin-bottom: 2px;
}
button {
  padding: 0;
  display: flex;
  align-items: center;
  justify-content: center;
  background: #fff;
  border: 2px solid #e6e6e6;
  border-radius: 7px;
}
.btn-ok {
  width: 64px;
  height: 64px;
  background: #3274a5;
  border-color: #3274a5;
}
.btn-close {
  width: 63px;
  height: 63px;
  margin-left: 8px;
}
.form {
  padding: 12px 24px 0;
}
.field-row {
  height: 72px;
  display: flex;
  align-items: center;
  gap: 24px;
  justify-content: flex-end;
}
.field-row label {
  margin-right: auto;
}
.field {
  height: 62px;
  display: flex;
  align-items: center;
  padding-left: 8px;
  border-bottom: 2px solid #e3e3e3;
}
.field svg {
  width: 18px;
  height: 11px;
  color: #666;
  margin: 0 8px 0 8px;
}
.unit {
  justify-content: flex-end;
  padding-left: 0;
}
.select {
  justify-content: space-between;
}
.field sup {
  font-size: 11px;
  line-height: 0;
  vertical-align: 10px;
}
.w139 { width: 139px; }
.w105 { width: 105px; }
.w268 { width: 268px; }
.w107 { width: 107px; }
.w137 { width: 137px; }
.w116 { width: 116px; }
.w128 { width: 128px; }

.assigned-head {
  height: 67px;
  display: flex;
  align-items: center;
  padding: 7px 24px 0;
}
.assigned-title {
  font-weight: 700;
}
.assigned-count {
  margin-left: 9px;
  color: #777;
}
.clear-list {
  margin-left: auto;
  font-size: 23px;
  color: #3276a8;
}
.assigned-box {
  height: 70px;
  margin: 0 23px 0 22px;
  padding: 8px 0;
  background: #e9f6fc;
  border: 3px solid #56b3e0;
  box-shadow: 0 0 6px rgba(86, 179, 224, .35);
}
.assigned-item {
  height: 48px;
  display: flex;
  align-items: center;
  justify-content: space-between;
  padding: 0 16px 0 19px;
  background: #d6edf6;
}
.remove {
  width: 29px;
  height: 29px;
  display: flex;
  align-items: center;
  justify-content: center;
  background: #fff;
  border: 2px solid #ccc;
  border-radius: 50%;
}
.material-foot {
  height: 96px;
  margin-top: 15px;
  display: flex;
  gap: 8px;
  padding: 16px 20px;
  border-top: 2px solid #e8e8e8;
}
.btn-icon {
  width: 63px;
  height: 63px;
}

.spacer {
  flex: 1;
}

/* geometry panel */
.geometry {
  width: 472px;
  height: 458px;
  flex: none;
}
.g-head {
  height: 69px;
  display: flex;
  align-items: center;
  gap: 18px;
  padding-left: 27px;
}
.g-root {
  position: relative;
  height: 59px;
  display: flex;
  align-items: center;
  gap: 17px;
  padding-left: 25px;
}
.g-root span {
  font-size: 26.3px;
  font-weight: 500;
}
.g-root::before {
  content: "";
  position: absolute;
  left: 35px;
  top: 3px;
  width: 2px;
  height: 16px;
  background: #e8e8e8;
}
.g-exp {
  width: 22px;
  height: 22px;
  position: relative;
}
.g-branch {
  position: relative;
  padding-bottom: 15px;
  border-bottom: 2px solid #e8e8e8;
}
.g-branch::before {
  content: "";
  position: absolute;
  z-index: 1;
  left: 83px;
  top: 2px;
  height: 140px;
  width: 2px;
  background: rgba(0, 0, 0, .09);
}
.g-row {
  position: relative;
  height: 56px;
  display: flex;
  align-items: center;
  gap: 16px;
  padding-left: 117px;
}
.g-row::before {
  content: "";
  position: absolute;
  left: 84px;
  top: 28px;
  width: 9px;
  height: 2px;
  background: rgba(0, 0, 0, .09);
}
.g-cube {
  width: 28px;
  height: 32px;
}
.g-selected {
  background: #ecf6fb;
  color: #4fb0e0;
}
.g-set {
  height: 71px;
  display: flex;
  align-items: center;
  padding: 0 0 2px 16px;
  border-bottom: 2px solid #e8e8e8;
}
.g-set .head-title {
  font-size: 25.8px;
}
.g-set:last-child {
  border-bottom: none;
}

/* things floating on the model view */
.handle {
  position: absolute;
  width: 7px;
  height: 32px;
  border-left: 2px solid #d5d5d5;
  border-right: 2px solid #d5d5d5;
}
.handle-left {
  left: 513px;
  top: 753px;
}
.handle-right {
  left: 2381px;
  top: 230px;
}
.view-tools {
  position: absolute;
  left: 1471.5px;
  top: 24px;
  display: flex;
  gap: 10.4px;
}
.tool {
  position: relative;
  width: 76px;
  height: 77px;
  display: flex;
  align-items: center;
  justify-content: center;
  border: 2px solid transparent;
  border-radius: 8px;
}
.tool-on {
  background: #f9fafb;
  border-color: #cfe3ef;
}
.tool-corner {
  position: absolute;
  right: -2px;
  bottom: 9px;
  width: 8px;
  height: 8px;
  border-right: 2px solid #999;
  border-bottom: 2px solid #999;
}
.tool-pin svg {
  margin-top: 12px;
}
.tool-select svg {
  margin: 3px 0 0 3px;
}
.beta {
  position: absolute;
  top: -3px;
  right: -4px;
  width: 58px;
  height: 22px;
  display: flex;
  align-items: center;
  justify-content: center;
  font-size: 15px;
  color: #666;
  background: #fff;
  border: 2px solid #eaeaea;
  border-radius: 11px;
}
.tool-sep::before {
  content: "";
  position: absolute;
  left: -2px;
  top: 4px;
  bottom: 4px;
  width: 2px;
  background: #efefef;
}
.tool-last::before {
  left: -8px;
}
.scale-bar {
  position: absolute;
  left: 1207px;
  top: 1484px;
  width: 466px;
  display: flex;
  flex-direction: column;
  align-items: center;
}
.scale-line {
  width: 100%;
  height: 8px;
  border-left: 4px solid #444;
  border-right: 4px solid #444;
  border-bottom: 4px solid #444;
}
.scale-label {
  margin-top: 11px;
  font-size: 25px;
  color: #444;
}
.chat-avatar {
  position: absolute;
  left: 2156px;
  top: 968px;
  width: 63px;
  height: 63px;
  display: flex;
  align-items: center;
  justify-content: center;
  border-radius: 50%;
  background: #fff;
  box-shadow: 0 4px 14px rgba(0, 0, 0, .1);
}
.chat-bubble {
  position: absolute;
  left: 2240px;
  top: 822px;
  width: 590px;
  height: 210px;
  padding: 30px 20px 0 45px;
  font-family: Inter, sans-serif;
  background: #fff;
  border-radius: 24px 24px 24px 0;
  box-shadow: 0 8px 30px rgba(0, 0, 0, .08);
}
.chat-bubble::before {
  content: "";
  position: absolute;
  left: -9px;
  bottom: 0;
  border-right: 9px solid #fff;
  border-top: 26px solid transparent;
}
.chat-from {
  font-size: 25.4px;
  line-height: 38px;
  color: #8a8a8a;
}
.chat-text {
  margin-top: 20px;
  font-size: 27.1px;
  line-height: 45px;
  color: #111;
  white-space: nowrap;
}
.launcher {
  position: absolute;
  left: 2744px;
  top: 1074px;
  width: 96px;
  height: 96px;
  display: flex;
  align-items: center;
  justify-content: center;
  border-radius: 50%;
  background: #3276a8;
  box-shadow: 0 4px 18px rgba(0, 0, 0, .14);
}
.launcher-badge {
  position: absolute;
  right: -19px;
  top: -1px;
  width: 34px;
  height: 34px;
  display: flex;
  align-items: center;
  justify-content: center;
  font-family: Inter, sans-serif;
  font-size: 21px;
  font-weight: 700;
  color: #fff;
  border-radius: 50%;
  background: #ef5b57;
}
.gizmo {
  position: absolute;
  right: 0;
  bottom: 0;
}
.g-label {
  font-family: "Open Sans", sans-serif;
  fill: #808080;
}
.g-top { font-size: 52px; }
.g-left { font-size: 50px; }
.g-back { font-size: 54px; }
.axis {
  font-family: "Open Sans", sans-serif;
  font-size: 104px;
}
.axis-y { fill: #7be36b; }
.axis-x { fill: #d9534f; }
.axis-z { fill: #4a4ae0; }
```

FILE: heatsink.js
```js
// draws the heat sink model: 5 columns of 10 fins, back to front
const svg = document.getElementById('sink');
const NS = 'http://www.w3.org/2000/svg';

const origin = [864.5, 1051.4];
const colStep = [169.2, 21.2];
const rowStep = [41.3, -33.7];
const W = [62.5, 7.8];
const H = [10.6, 108.5];

const COLS = 5;
const ROWS = 10;

const LIGHT = '#539bc0';
const DARK = '#4d92b6';
const EDGE = '#b4def5';
const EDGE_W = 2.1;

function add(a, b) {
  return [a[0] + b[0], a[1] + b[1]];
}

function poly(points, fill) {
  const el = document.createElementNS(NS, 'polygon');
  el.setAttribute('points', points.map(p => p.join(',')).join(' '));
  el.setAttribute('fill', fill);
  svg.appendChild(el);
}

function line(p, q, color, width, opacity) {
  const el = document.createElementNS(NS, 'line');
  el.setAttribute('x1', p[0]);
  el.setAttribute('y1', p[1]);
  el.setAttribute('x2', q[0]);
  el.setAttribute('y2', q[1]);
  el.setAttribute('stroke', color);
  el.setAttribute('stroke-width', width);
  if (opacity) el.setAttribute('stroke-opacity', opacity);
  el.setAttribute('stroke-linecap', 'round');
  svg.appendChild(el);
}

function fin(i, j) {
  const a = [
    origin[0] + i * colStep[0] + j * rowStep[0],
    origin[1] + i * colStep[1] + j * rowStep[1]
  ];
  // fins look deeper towards the back of the model
  const t = j / (ROWS - 1);
  const depth = [16.5 + 5 * t, -13 - 5.7 * t];
  const b = add(a, W);
  const c = add(b, depth);
  const d = add(a, depth);
  return { a, b, c, d, a2: add(a, H), b2: add(b, H), c2: add(c, H), d2: add(d, H) };
}

// plate corners
const L = [878.3, 1193.5];
const B = [1616.3, 1286.5];
const R = [2012, 966];
const L2 = [882, 1237];
const B2 = [1620.4, 1330];
const R2 = [2016, 1008];

// grey base under the blue solid
poly([L, B, B2, L2], '#adb1c8');
poly([B, R, R2, B2], '#878b9e');
line(L, L2, '#111', 1.5);
line(L2, B2, '#222', 1.5);
line(B, B2, '#222', 1.5);
line(B2, R2, '#222', 1.5);
line(R, R2, '#222', 1.5);

const f00 = fin(0, 0);
const f40 = fin(COLS - 1, 0);
const f09 = fin(0, ROWS - 1);
const f49 = fin(COLS - 1, ROWS - 1);

// floor and the two walls of the blue solid
poly([f00.a2, f40.b2, f49.c2, f09.d2], DARK);
poly([L, B, f40.b2, f00.a2], LIGHT);
poly([B, R, f49.c2, f40.b2], DARK);
line(L, B, EDGE, 1.6);
line(B, R, EDGE, 1.8);

for (let j = ROWS - 1; j >= 0; j--) {
  for (let i = 0; i < COLS; i++) {
    const f = fin(i, j);
    const last = i === COLS - 1;
    // top of the right wall, only open between fins of the last column
    if (last && j < ROWS - 1) {
      line(f.c2, fin(i, j + 1).b2, EDGE, EDGE_W);
    }
    poly([f.b, f.c, f.c2, f.b2], DARK);
    poly([f.a, f.b, f.b2, f.a2], LIGHT);
    poly([f.a, f.b, f.c, f.d], DARK);

    line(f.a, f.b, EDGE, EDGE_W);
    line(f.b, f.c, EDGE, EDGE_W);
    line(f.c, f.d, EDGE, EDGE_W);
    line(f.d, f.a, EDGE, EDGE_W);
    line(f.c, f.c2, EDGE, EDGE_W);
    line(f.b, j === 0 && last ? B : f.b2, EDGE, EDGE_W);
    line(f.a, j === 0 && i === 0 ? L : f.a2, EDGE, EDGE_W);
    if (!last) {
      line(f.b2, f.c2, EDGE, EDGE_W);
    }
    if (j > 0) {
      line(f.a2, f.b2, EDGE, EDGE_W);
    } else if (!last) {
      line(f.b2, fin(i + 1, 0).a2, EDGE, EDGE_W);
    }
  }
}

// last fin on the right runs down into the corner of the plate
line(f49.c, R, EDGE, EDGE_W);

// faint see-through edges of the transparent solid
for (let j = 0; j < ROWS; j++) {
  for (let i = 0; i < COLS; i++) {
    const f = fin(i, j);
    line(f.d, f.d2, EDGE, 1.4, 0.18);
    line(f.d2, f.a2, EDGE, 1.4, 0.18);
    line(f.d2, f.c2, EDGE, 1.4, 0.18);
  }
}
line(L, add(L, [73, -58]), EDGE, 1.4, 0.2);
```
